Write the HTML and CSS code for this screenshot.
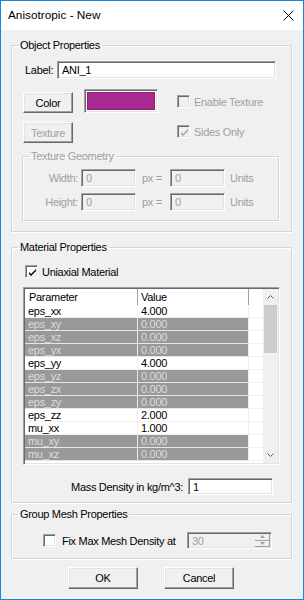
FILE: index.html
```html
<!DOCTYPE html>
<html>
<head>
<meta charset="utf-8">
<link rel="stylesheet" href="styles.css">
</head>
<body>
<div class="window">
  <div class="titlebar">
    <span class="title">Anisotropic - New</span>
    <svg class="close" width="11" height="11" viewBox="0 0 11 11"><path d="M0.5 0.5 L10.5 10.5 M10.5 0.5 L0.5 10.5" stroke="#000" stroke-width="1" fill="none"/></svg>
  </div>
  <div class="client">
    <fieldset class="group obj">
      <legend>Object Properties</legend>
      <div class="label-row">
        <span class="label-text">Label:</span>
        <div class="edit label-edit">ANI_1</div>
      </div>
      <div class="obj-mid">
        <div class="btncol">
          <div class="btn small">Color</div>
          <div class="btn small disabled">Texture</div>
        </div>
        <div class="swatch"><div class="swatch-fill"></div></div>
        <div class="checks">
          <div class="chk disabled"><span class="box"></span><span>Enable Texture</span></div>
          <div class="chk disabled"><span class="box"><svg width="9" height="9" viewBox="0 0 9 9"><path d="M1 4 L3 6 L8 1 L8 3 L3 8 L1 6 Z" fill="#a0a0a0"/></svg></span><span>Sides Only</span></div>
        </div>
      </div>
      <fieldset class="group geo disabled">
        <legend>Texture Geometry</legend>
        <div class="geo-row">
          <span class="geo-label">Width:</span>
          <div class="edit dis geo-edit">0</div>
          <span class="px">px =</span>
          <div class="edit dis geo-edit">0</div>
          <span class="units">Units</span>
        </div>
        <div class="geo-row">
          <span class="geo-label">Height:</span>
          <div class="edit dis geo-edit">0</div>
          <span class="px">px =</span>
          <div class="edit dis geo-edit">0</div>
          <span class="units">Units</span>
        </div>
      </fieldset>
    </fieldset>

    <fieldset class="group mat">
      <legend>Material Properties</legend>
      <div class="chk uni"><span class="box"><svg width="9" height="9" viewBox="0 0 9 9"><path d="M1 4 L3 6 L8 1 L8 3 L3 8 L1 6 Z" fill="#000"/></svg></span><span>Uniaxial Material</span></div>
      <div class="table">
        <div class="tgrid">
          <div class="trow head"><div class="c1">Parameter</div><div class="c2">Value</div><div class="c3"></div></div>
          <div class="trow"><div class="c1">eps_xx</div><div class="c2">4.000</div><div class="c3"></div></div>
          <div class="trow off"><div class="c1">eps_xy</div><div class="c2">0.000</div><div class="c3"></div></div>
          <div class="trow off"><div class="c1">eps_xz</div><div class="c2">0.000</div><div class="c3"></div></div>
          <div class="trow off"><div class="c1">eps_yx</div><div class="c2">0.000</div><div class="c3"></div></div>
          <div class="trow"><div class="c1">eps_yy</div><div class="c2">4.000</div><div class="c3"></div></div>
          <div class="trow off"><div class="c1">eps_yz</div><div class="c2">0.000</div><div class="c3"></div></div>
          <div class="trow off"><div class="c1">eps_zx</div><div class="c2">0.000</div><div class="c3"></div></div>
          <div class="trow off"><div class="c1">eps_zy</div><div class="c2">0.000</div><div class="c3"></div></div>
          <div class="trow"><div class="c1">eps_zz</div><div class="c2">2.000</div><div class="c3"></div></div>
          <div class="trow"><div class="c1">mu_xx</div><div class="c2">1.000</div><div class="c3"></div></div>
          <div class="trow off"><div class="c1">mu_xy</div><div class="c2">0.000</div><div class="c3"></div></div>
          <div class="trow off"><div class="c1">mu_xz</div><div class="c2">0.000</div><div class="c3"></div></div>
        </div>
        <div class="vscroll">
          <div class="sbtn"><svg width="7" height="4" viewBox="0 0 7 4"><path d="M0.5 3.5 L3.5 0.5 L6.5 3.5" stroke="#606060" fill="none"/></svg></div>
          <div class="thumb"></div>
          <div class="track"></div>
          <div class="sbtn"><svg width="7" height="4" viewBox="0 0 7 4"><path d="M0.5 0.5 L3.5 3.5 L6.5 0.5" stroke="#606060" fill="none"/></svg></div>
        </div>
      </div>
      <div class="mass-row">
        <span class="mass-label">Mass Density in kg/m^3:</span>
        <div class="edit mass-edit">1</div>
      </div>
    </fieldset>

    <fieldset class="group mesh">
      <legend>Group Mesh Properties</legend>
      <div class="mesh-row">
        <div class="chk fix"><span class="box"></span><span>Fix Max Mesh Density at</span></div>
        <div class="edit dis spin"><span class="spin-val">30</span>
          <div class="spinbtns">
            <div class="sb"><svg width="5" height="3" viewBox="0 0 5 3"><path d="M0 3 L2.5 0 L5 3 Z" fill="#a0a0a0"/></svg></div>
            <div class="sb"><svg width="5" height="3" viewBox="0 0 5 3"><path d="M0 0 L2.5 3 L5 0 Z" fill="#a0a0a0"/></svg></div>
          </div>
        </div>
      </div>
    </fieldset>

    <div class="buttons">
      <div class="btn big">OK</div>
      <div class="btn big">Cancel</div>
    </div>
  </div>
</div>
</body>
</html>
```

FILE: styles.css
```css
* { box-sizing: border-box; }
html, body { margin: 0; padding: 0; background: #f0f0f0; }
body {
  font-family: "Liberation Sans", Arial, sans-serif;
  font-size: 11px;
  letter-spacing: -0.3px;
  color: #000;
}
.window {
  width: 304px;
  height: 600px;
  border: 1px solid #1a84d6;
  background: #f0f0f0;
  display: flex;
  flex-direction: column;
}
.titlebar {
  height: 29px;
  background: #fff;
  display: flex;
  align-items: center;
  justify-content: space-between;
  padding: 0 9px 1px 7px;
  flex: none;
}
.title {
  font-size: 11.8px;
  letter-spacing: 0;
}
.close { display: block; margin-top: 0; }
.client {
  display: flex;
  flex-direction: column;
  padding-left: 10px;
}
.group {
  margin: 0;
  padding: 0;
  width: 281px;
  min-width: 0;
  border: 1px solid #d5d5d5;
  box-shadow: 1px 1px 0 #fff, inset 1px 1px 0 #fff;
}
.group legend {
  margin-left: 6px;
  padding: 0 2px;
  line-height: 13px;
  height: 13px;
}
.obj { margin-top: 9px; height: 193px; }
.mat { margin-top: 9px; height: 262px; }
.mesh { margin-top: 5px; height: 51px; }

.edit {
  background: #fff;
  border-style: solid;
  border-width: 1px;
  border-color: #a0a0a0 #fff #fff #a0a0a0;
  box-shadow: inset 1px 1px 0 #696969, inset -1px -1px 0 #e3e3e3;
  padding: 0 4px;
  display: flex;
  align-items: center;
}
.edit.dis { background: #f0f0f0; color: #a0a0a0; }

.label-row {
  display: flex;
  align-items: center;
  margin-top: 9px;
  margin-left: 13px;
  height: 18px;
}
.label-text { width: 32px; }
.label-edit { width: 219px; height: 18px; }

.obj-mid {
  display: flex;
  align-items: flex-start;
  margin-top: 10px;
  height: 54px;
}
.btncol {
  display: flex;
  flex-direction: column;
  gap: 9px;
  margin-left: 11px;
  margin-top: 3px;
}
.btn {
  display: flex;
  align-items: center;
  justify-content: center;
  background: #f0f0f0;
  border-style: solid;
  border-width: 1px;
  border-color: #fff #696969 #696969 #fff;
  box-shadow: inset -1px -1px 0 #a0a0a0, inset 1px 1px 0 #e3e3e3;
}
.btn.small { width: 50px; height: 21px; }
.btn.disabled { color: #a0a0a0; }
.btn.big { width: 70px; height: 22px; }

.swatch {
  margin-left: 11px;
  width: 74px;
  height: 24px;
  border-style: solid;
  border-width: 1px;
  border-color: #a0a0a0 #fff #fff #a0a0a0;
  box-shadow: inset 1px 1px 0 #696969, inset -1px -1px 0 #e3e3e3;
  padding: 2px;
  background: #fff;
}
.swatch-fill {
  width: 100%;
  height: 100%;
  background: #a8298f;
  border: 1px solid #8a1f74;
}
.checks {
  display: flex;
  flex-direction: column;
  gap: 17px;
  margin-left: 19px;
  margin-top: 6px;
}
.chk {
  display: flex;
  align-items: center;
  gap: 4px;
  height: 13px;
}
.chk.disabled { color: #a0a0a0; }
.box {
  width: 13px;
  height: 13px;
  flex: none;
  background: #fff;
  border-style: solid;
  border-width: 1px;
  border-color: #a0a0a0 #fff #fff #a0a0a0;
  box-shadow: inset 1px 1px 0 #696969, inset -1px -1px 0 #e3e3e3;
  display: flex;
  align-items: center;
  justify-content: center;
}
.box svg { display: block; margin: 1px 0 0 1px; }
.chk.disabled .box { background: #f0f0f0; }

.geo {
  margin-left: 10px;
  margin-top: 7px;
  width: 257px;
  height: 71px;
  color: #a0a0a0;
}
.geo legend { margin-left: 6px; }
.geo-row {
  display: flex;
  align-items: center;
  height: 18px;
  margin-top: 6px;
}
.geo-label { width: 55px; text-align: right; flex: none; }
.geo-edit { width: 55px; height: 18px; margin-left: 3px; flex: none; }
.px { width: 31px; padding-left: 6px; flex: none; }
.units { margin-left: 5px; }

.uni { margin-top: 11px; margin-left: 13px; }
.table {
  margin-top: 9px;
  margin-left: 11px;
  width: 257px;
  height: 178px;
  border-style: solid;
  border-width: 1px;
  border-color: #a0a0a0 #fff #fff #a0a0a0;
  box-shadow: inset 1px 1px 0 #696969, inset -1px -1px 0 #e3e3e3;
  padding: 1px;
  display: flex;
  overflow: hidden;
}
.tgrid {
  width: 238px;
  background: #fff;
  display: flex;
  flex-direction: column;
  overflow: hidden;
}
.trow {
  display: flex;
  height: 13px;
  flex: none;
  line-height: 12px;
}
.trow > div {
  border-bottom: 1px solid #f0f0f0;
  white-space: nowrap;
  overflow: hidden;
}
.c1 { width: 113px; padding-left: 3px; border-right: 1px solid #f0f0f0; }
.c2 { width: 111px; padding-left: 3px; border-right: 1px solid #f0f0f0; }
.c3 { width: 14px; }
.trow.head { height: 16px; line-height: 16px; }
.trow.head > div {
  background: #fff;
  border-bottom: none;
}
.trow.head .c1, .trow.head .c2 { border-right: 1px solid #a0a0a0; }
.trow.head .c1 { padding-left: 4px; }
.trow.off .c1, .trow.off .c2 {
  background: #999;
  color: #dcdcdc;
  border-bottom-color: #e6e6e6;
}
.trow.off .c1 { border-right-color: #e6e6e6; }
.vscroll {
  width: 15px;
  background: #f0f0f0;
  display: flex;
  flex-direction: column;
}
.sbtn {
  height: 16px;
  display: flex;
  align-items: center;
  justify-content: center;
  flex: none;
}
.sbtn svg { display: block; }
.thumb {
  height: 48px;
  background: #cdcdcd;
  margin: 0 1px;
  flex: none;
}
.track { flex: 1; }

.mass-row {
  display: flex;
  align-items: center;
  justify-content: flex-end;
  margin-top: 13px;
  margin-right: 18px;
  height: 17px;
}
.mass-label { margin-right: 5px; }
.mass-edit { width: 85px; height: 17px; }

.mesh-row {
  display: flex;
  align-items: center;
  margin-top: 11px;
  height: 17px;
}
.fix { margin-left: 31px; width: 144px; gap: 6px; }
.spin {
  width: 85px;
  height: 17px;
  padding-right: 1px;
  justify-content: space-between;
}
.spinbtns {
  display: flex;
  flex-direction: column;
  width: 15px;
  height: 13px;
}
.sb {
  flex: 1;
  display: flex;
  align-items: center;
  justify-content: center;
  background: #f0f0f0;
  border-style: solid;
  border-width: 0 1px 1px 0;
  border-color: #a0a0a0;
}
.sb svg { display: block; }

.buttons {
  display: flex;
  gap: 26px;
  margin-top: 8px;
  margin-left: 57px;
}
```
